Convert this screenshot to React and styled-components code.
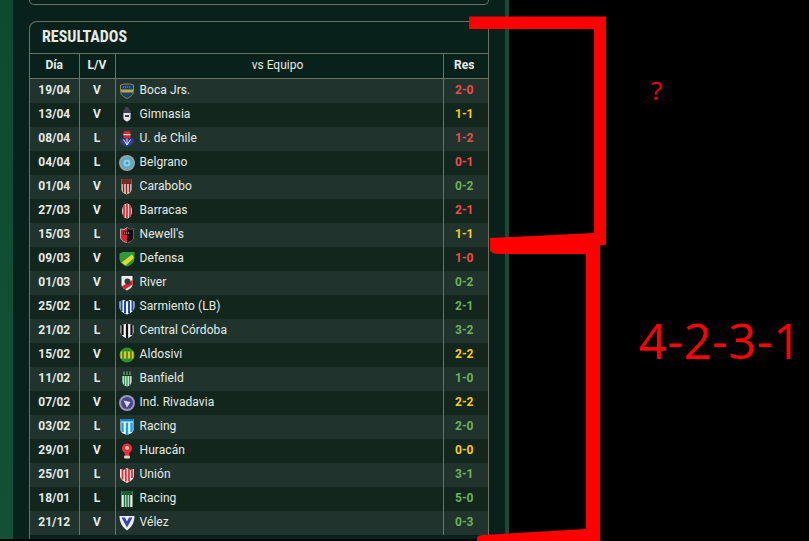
import React from 'react'
import styled, { createGlobalStyle } from 'styled-components'

const GlobalStyle = createGlobalStyle`
  html, body {
    margin: 0;
    padding: 0;
    background: #000;
    height: 100%;
    overflow: hidden;
  }
`

const Page = styled.div`
  position: relative;
  display: flex;
  align-items: flex-start;
  width: 809px;
  height: 541px;
  overflow: hidden;
  background: #000;
  font-family: Roboto, "Liberation Sans", sans-serif;
`

const SideGlow = styled.div`
  width: 13px;
  height: 539px;
  background: linear-gradient(180deg, #0e4a30 0%, #0f4f33 50%, #115137 100%);
`

const Panel = styled.div`
  width: 460px;
  height: 539px;
  padding: 0 16px;
  background: #08211a;
  display: flex;
  flex-direction: column;
  gap: 16px;
`

const PanelEdge = styled.div`
  width: 4px;
  height: 541px;
  background: #1a4a35;
`

const PrevCard = styled.div`
  height: 4px;
  border: 1px solid #6e7265;
  border-top: none;
  border-radius: 0 0 8px 8px;
`

const Card = styled.section`
  border: 1px solid #6e7265;
  border-bottom: none;
  border-radius: 8px 8px 0 0;
  flex: 1;
  overflow: hidden;
`

const CardTitle = styled.h2`
  margin: 0;
  height: 28px;
  padding: 0 0 3px 12px;
  display: flex;
  align-items: center;
  font-size: 16px;
  font-weight: 700;
  font-stretch: 75%;
  color: #e6ebe6;
`

const Table = styled.table`
  width: 459px;
  border-collapse: collapse;
  table-layout: fixed;
  font-size: 12px;
  color: #e6ebe6;
`

const HeadCell = styled.th`
  height: 21px;
  padding: 0 ${p => p.$shift || 0}px 3px 0;
  text-align: center;
  font-weight: ${p => (p.$light ? 400 : 700)};
  border-top: 1px solid #6e7265;
  border-bottom: 1px solid #6e7265;
  & + & {
    border-left: 1px solid #6e7265;
  }
`

const Row = styled.tr`
  height: 24px;
  background: ${p => (p.$odd ? '#20342d' : '#12261e')};
`

const Cell = styled.td`
  padding: 0 0 2px;
  text-align: center;
  font-weight: 700;
  & + & {
    border-left: 1px solid #6e7265;
  }
`

const TeamCell = styled.td`
  padding: 0 0 0 3px;
  border-left: 1px solid #6e7265;
  font-weight: 400;
`

const Team = styled.div`
  display: flex;
  align-items: center;
  gap: 5px;
`

const TeamName = styled.span`
  margin-bottom: 2px;
  letter-spacing: 0.07px;
`

const Score = styled.td`
  padding: 0 4px 2px 0;
  text-align: center;
  font-weight: 700;
  border-left: 1px solid #6e7265;
  color: ${p => p.$color};
`

const Overlay = styled.svg`
  position: absolute;
  inset: 0;
  width: 809px;
  height: 541px;
`

const Note = styled.span`
  position: absolute;
  left: ${p => p.$x}px;
  top: ${p => p.$y}px;
  font-family: "Open Sans", "Noto Sans", sans-serif;
  font-size: ${p => p.$size}px;
  letter-spacing: ${p => p.$track || 0}px;
  line-height: 1;
  color: #f00;
`

const crests = {
  boca: (
    <>
      <path d="M1.500 2C5 .5 11 .5 14.500 2v6.500c0 3-3 5.500-6.500 7-3.500-1.500-6.500-4-6.500-7z" fill="#1d3f70" stroke="#8f8a45" />
      <path d="M2 6.500h12v3H2.300z" fill="#b5a83f" />
      <path d="M4 4h8" stroke="#b5a83f" strokeDasharray="1 1" />
    </>
  ),
  gimnasia: (
    <>
      <path d="M6.500 0h3l.500 2 1.500 1v2l.500 1v5c0 2-2 3-4 4.500C6 14 4 13 4 11V6l.500-1V3L6 2z" fill="#3c3f4a" />
      <path d="M4.500 6h7v5c0 1.500-1.500 2.500-3.500 3.500-2-1-3.500-2-3.500-3.500z" fill="#e2e4ec" />
      <path d="M6 8h4v2H6z" fill="#3a3d55" />
    </>
  ),
  uchile: (
    <>
      <path d="M1.500 7.500h13v3c0 2.500-3 4-6.500 5.500-3.500-1.500-6.500-3-6.500-5.500z" fill="#283f9c" />
      <rect x="4.500" y="0" width="7" height="7.500" rx="1.500" fill="#dc2436" />
      <rect x="4.500" y="3" width="7" height="1.200" fill="#f3e4e4" />
      <path d="M4.500 8.500L8 14l3.500-5.500M8 7.500V14" stroke="#e9ecf6" fill="none" />
    </>
  ),
  belgrano: (
    <>
      <circle cx="8" cy="8" r="8" fill="#9aa09e" />
      <circle cx="8" cy="8" r="6" fill="#52a9cc" />
      <circle cx="8" cy="8" r="3.500" fill="#8fd0ea" />
      <circle cx="8" cy="8" r="1.500" fill="#4498bb" />
    </>
  ),
  carabobo: (
    <>
      <path d="M2.500 0h10v11c0 2-2.500 3.500-5 4.500-2.500-1-5-2.500-5-4.500z" fill="#ebdcd2" />
      <rect x="2.500" y="0" width="10" height="5" fill="#7a2a24" />
      <path d="M4.500 5v8.500M7.500 5v10M10.500 5v8.500" stroke="#8c1f24" strokeWidth="1.500" />
    </>
  ),
  barracas: (
    <>
      <ellipse cx="8" cy="8" rx="5" ry="7.500" fill="#f5dcd8" />
      <path d="M5 2v12M8 .5v15M11 2v12" stroke="#dc2f3a" strokeWidth="1.800" />
    </>
  ),
  newells: (
    <>
      <path d="M1.500 2L5 2.500 8 .5l3 2 3.500-.5v8c0 3-3 4.500-6.500 6-3.500-1.500-6.500-3-6.500-6z" fill="#e0202c" stroke="#d8d8d8" strokeWidth="0.700" />
      <path d="M8 .5l3 2 3.500-.5v8c0 3-3 4.500-6.500 6z" fill="#0d0d0d" />
      <rect x="4" y="4.500" width="8" height="3" fill="#141414" />
      <path d="M5 6h6" stroke="#eee" strokeDasharray="1 1" />
    </>
  ),
  defensa: (
    <>
      <path d="M.5 2.500L4 1h11.500v6.500C15.500 11.500 12 14 8 15.500 3.500 14 .5 11.500.5 7.500z" fill="#2f9a3a" />
      <path d="M2.500 11.500L13 3.500l2 3.500-8.500 7.500z" fill="#e3d92e" />
    </>
  ),
  river: (
    <>
      <path d="M2.500 1h11v8.500c0 3-3 4.500-5.500 6-2.500-1.500-5.500-3-5.500-6z" fill="#efefef" />
      <path d="M2.500 11.500L13.500 5v4.500L6 14.500z" fill="#e3202a" />
      <circle cx="8.500" cy="6.500" r="3" fill="#3a3a3a" />
    </>
  ),
  sarmiento: (
    <>
      <path d="M.5 2.500L5 1l3 1.500L11 1l4.500 1.500v5.500c0 3.500-3.500 6-7.500 7.500C4 14 .5 11.500.5 8z" fill="#f2f4fa" />
      <path d="M2.500 2v10M6 2v12.500M10 2v12.500M13.500 2v10" stroke="#1f46b0" strokeWidth="2" />
    </>
  ),
  central: (
    <>
      <path d="M1.500 2.500L8 .5l6.500 2V9c0 3-3 5-6.500 6.500C4.500 14 1.500 12 1.500 9z" fill="#f2f2f2" />
      <path d="M3.500 2v10M8 .5v15M12.500 2v10" stroke="#0c0c0c" strokeWidth="2.200" />
    </>
  ),
  aldosivi: (
    <>
      <circle cx="8" cy="8" r="7.500" fill="#2f8f30" />
      <path d="M1.500 4.500h13v7h-13z" fill="#e5cb1f" />
      <path d="M4 4.500v7M8 4.500v7M12 4.500v7" stroke="#2a7a2c" strokeWidth="1.500" />
    </>
  ),
  banfield: (
    <>
      <path d="M3.500 5h9v6c0 2-2 3.500-4.500 4.500C5.500 14.500 3.500 13 3.500 11z" fill="#eef5ee" />
      <path d="M5.500 5v9.500M8 5v10.500M10.500 5v9.500" stroke="#2f9a4c" strokeWidth="1.400" />
      <path d="M5 .5v3.500M8 .5v3.500M11 .5v3.500" stroke="#86c092" />
    </>
  ),
  rivadavia: (
    <>
      <circle cx="8" cy="8" r="8" fill="#9a96b8" />
      <circle cx="8" cy="8" r="6" fill="#4a4590" />
      <path d="M4.500 5.500l7 1.500L8 12.500z" fill="#dcd9ec" />
    </>
  ),
  racing: (
    <>
      <path d="M1.500 0h13v11c0 2.500-3 3.500-6.500 5-3.500-1.500-6.500-2.500-6.500-5z" fill="#eef8fd" />
      <rect x="1.500" y="0" width="13" height="2.500" fill="#1585c8" />
      <path d="M3.500 3.500v9.500M8 3.500V16M12.500 3.500v9.500" stroke="#12a2ec" strokeWidth="2.400" />
    </>
  ),
  huracan: (
    <>
      <circle cx="8" cy="5.500" r="5" fill="#ee2f38" />
      <path d="M5.500 9.500h5l-.7 3H6.200z" fill="#ee2f38" />
      <rect x="5" y="12.500" width="6" height="3" rx="1" fill="#f5c9c9" />
      <circle cx="8" cy="5" r="2" fill="#f9bcbc" />
    </>
  ),
  union: (
    <>
      <path d="M1 2l3.500 1L8 1l3.500 2L15 2v7c0 3-3 5-7 7-4-2-7-4-7-7z" fill="#f5dedb" />
      <path d="M3.500 3v9.500M6.800 2v12.500M10 2v12.500M13 3v8" stroke="#dc2a3a" strokeWidth="1.700" />
    </>
  ),
  racingcba: (
    <>
      <rect x="2.500" y="0" width="11" height="16" fill="#e9eee9" />
      <path d="M5.500 4v12M8 4v12M10.500 4v12" stroke="#17703a" strokeWidth="1.500" />
      <rect x="2.500" y="0" width="11" height="4" fill="#1c5e34" />
    </>
  ),
  velez: (
    <>
      <path d="M.5 1h15c0 6-2.500 11-7.500 14.500C3 12 .5 7 .5 1z" fill="#eceef8" />
      <path d="M2.500 2.500L8 12.500l5.500-10h-3.500L8 6.500 6 2.500z" fill="#3a46ad" />
    </>
  ),
}

const Crest = ({ kind }) => (
  <svg width="16" height="16" viewBox="0 0 16 16">{crests[kind]}</svg>
)

const RED = '#f24a4a'
const YELLOW = '#facc15'
const GREEN = '#6fb05a'

const matches = [
  ['19/04', 'V', 'boca', 'Boca Jrs.', '2-0', RED],
  ['13/04', 'V', 'gimnasia', 'Gimnasia', '1-1', YELLOW],
  ['08/04', 'L', 'uchile', 'U. de Chile', '1-2', RED],
  ['04/04', 'L', 'belgrano', 'Belgrano', '0-1', RED],
  ['01/04', 'V', 'carabobo', 'Carabobo', '0-2', GREEN],
  ['27/03', 'V', 'barracas', 'Barracas', '2-1', RED],
  ['15/03', 'L', 'newells', "Newell's", '1-1', YELLOW],
  ['09/03', 'V', 'defensa', 'Defensa', '1-0', RED],
  ['01/03', 'V', 'river', 'River', '0-2', GREEN],
  ['25/02', 'L', 'sarmiento', 'Sarmiento (LB)', '2-1', GREEN],
  ['21/02', 'L', 'central', 'Central Córdoba', '3-2', GREEN],
  ['15/02', 'V', 'aldosivi', 'Aldosivi', '2-2', YELLOW],
  ['11/02', 'L', 'banfield', 'Banfield', '1-0', GREEN],
  ['07/02', 'V', 'rivadavia', 'Ind. Rivadavia', '2-2', YELLOW],
  ['03/02', 'L', 'racing', 'Racing', '2-0', GREEN],
  ['29/01', 'V', 'huracan', 'Huracán', '0-0', YELLOW],
  ['25/01', 'L', 'union', 'Unión', '3-1', GREEN],
  ['18/01', 'L', 'racingcba', 'Racing', '5-0', GREEN],
  ['21/12', 'V', 'velez', 'Vélez', '0-3', GREEN],
]

export default function App() {
  return (
    <Page>
      <GlobalStyle />
      <SideGlow />
      <Panel>
        <PrevCard />
        <Card>
          <CardTitle>RESULTADOS</CardTitle>
          <Table>
            <colgroup>
              <col width="49" />
              <col width="36" />
              <col width="328" />
              <col width="46" />
            </colgroup>
            <thead>
              <tr>
                <HeadCell>Día</HeadCell>
                <HeadCell>L/V</HeadCell>
                <HeadCell $light $shift={3}>vs Equipo</HeadCell>
                <HeadCell $shift={4}>Res</HeadCell>
              </tr>
            </thead>
            <tbody>
              {matches.map(([date, side, crest, team, score, color], i) => (
                <Row key={date} $odd={i % 2 === 0}>
                  <Cell>{date}</Cell>
                  <Cell>{side}</Cell>
                  <TeamCell>
                    <Team>
                      <Crest kind={crest} />
                      <TeamName>{team}</TeamName>
                    </Team>
                  </TeamCell>
                  <Score $color={color}>{score}</Score>
                </Row>
              ))}
            </tbody>
          </Table>
        </Card>
      </Panel>
      <PanelEdge />
      <Overlay viewBox="0 0 809 541">
        <path d="M469 16.500H606V245H600V541H477V538Q478 535 483 535L586 529V254H500Q491 254 490 250V238L594 233V29H469Z" fill="#f00" />
      </Overlay>
      <Note $x={651} $y={77} $size={26}>?</Note>
      <Note $x={639} $y={316} $size={49} $track={0.5}>4-2-3-1</Note>
    </Page>
  )
}
